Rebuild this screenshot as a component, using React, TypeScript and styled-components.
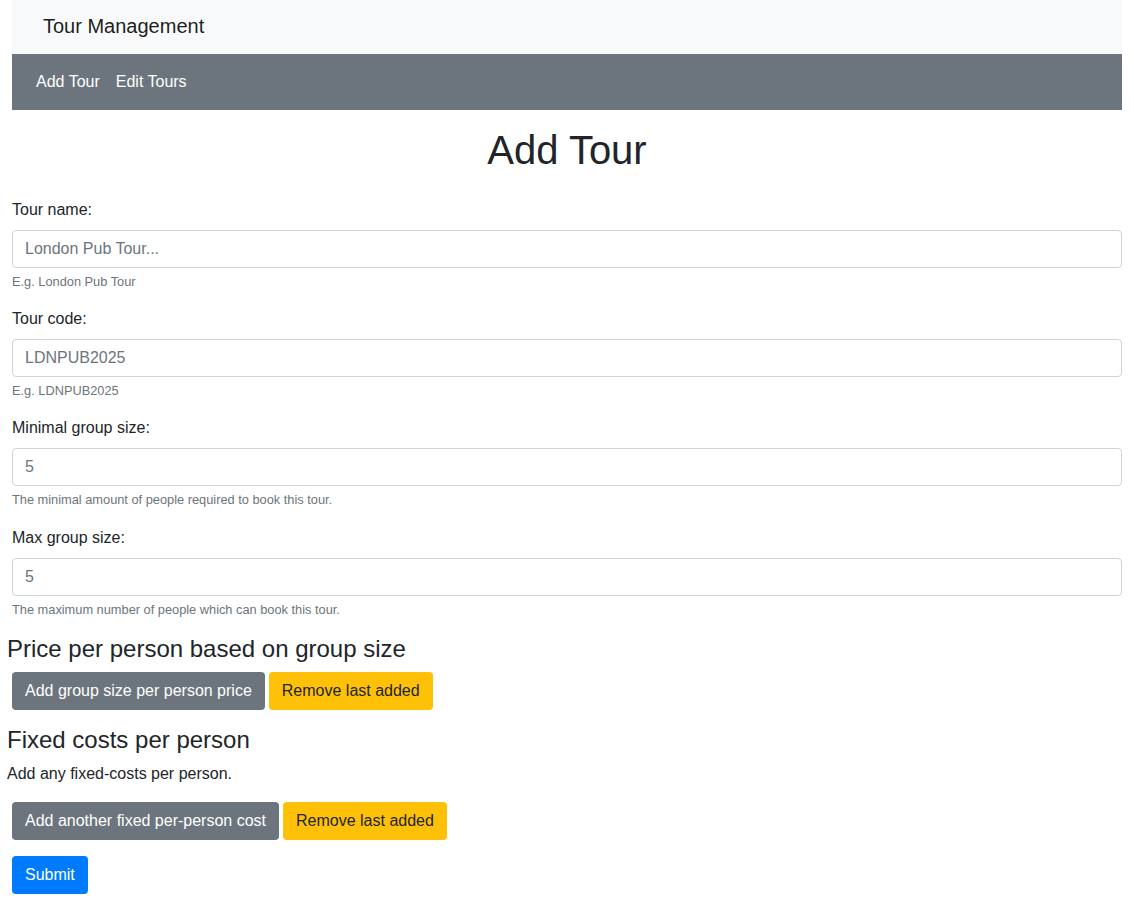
import React, { FC } from 'react';
import styled, { createGlobalStyle } from 'styled-components';

const GlobalStyle = createGlobalStyle`
    body {
        margin: 0;
        font-family: "Liberation Sans", Arial, Helvetica, sans-serif;
        font-size: 16px;
        line-height: 1.5;
        color: #212529;
        background: #fff;
    }
    * {
        box-sizing: border-box;
    }
`;

const Page = styled.div`
    padding: 0 12px;
`;

const BrandBar = styled.nav`
    display: flex;
    align-items: center;
    height: 54px;
    padding: 0 31px 2px;
    background: #f8f9fa;
`;

const Brand = styled.span`
    font-size: 20px;
    line-height: 30px;
    color: rgba(0, 0, 0, 0.9);
`;

const MenuBar = styled.nav`
    display: flex;
    align-items: center;
    height: 56px;
    padding: 0 16px;
    background: #6c757d;
`;

const MenuLink = styled.a`
    padding: 8px;
    color: #fff;
    text-decoration: none;
    line-height: 24px;
`;

const Title = styled.h1`
    margin: 16px 0 24px;
    font-size: 40px;
    font-weight: 500;
    line-height: 1.2;
    text-align: center;
`;

const FormGroup = styled.div`
    margin-bottom: 16px;
`;

const Label = styled.label`
    display: block;
    margin-bottom: 8px;
`;

const Input = styled.input`
    display: block;
    width: 100%;
    height: 38px;
    padding: 6px 12px;
    font-family: inherit;
    font-size: 16px;
    color: #495057;
    border: 1px solid #ced4da;
    border-radius: 4px;

    &::placeholder {
        color: #6c757d;
    }
`;

const Help = styled.small`
    display: block;
    margin-top: 4px;
    font-size: 12.8px;
    line-height: 19.2px;
    color: #6c757d;
`;

const Section = styled.div`
    margin-left: -5px;
`;

const SectionTitle = styled.h4`
    margin: 0 0 8px;
    font-size: 24px;
    font-weight: 500;
    line-height: 1.2;
`;

const Text = styled.p`
    margin: 0 0 16px;
`;

const ButtonRow = styled.div`
    display: flex;
    gap: 4px;
    margin: 0 0 16px 5px;
`;

const Button = styled.button<{ $variant: 'secondary' | 'warning' | 'primary' }>`
    height: 38px;
    padding: 6px 12px;
    font-family: inherit;
    font-size: 16px;
    line-height: 24px;
    border: 1px solid transparent;
    border-radius: 4px;
    cursor: pointer;
    color: ${(p) => (p.$variant === 'warning' ? '#212529' : '#fff')};
    background: ${(p) =>
        p.$variant === 'warning' ? '#ffc107' : p.$variant === 'primary' ? '#007bff' : '#6c757d'};
`;

const fields = [
    { label: 'Tour name:', placeholder: 'London Pub Tour...', help: 'E.g. London Pub Tour' },
    { label: 'Tour code:', placeholder: 'LDNPUB2025', help: 'E.g. LDNPUB2025' },
    {
        label: 'Minimal group size:',
        placeholder: '5',
        help: 'The minimal amount of people required to book this tour.',
    },
    {
        label: 'Max group size:',
        placeholder: '5',
        help: 'The maximum number of people which can book this tour.',
    },
];

const App: FC = () => (
    <Page>
        <GlobalStyle />
        <BrandBar>
            <Brand>Tour Management</Brand>
        </BrandBar>
        <MenuBar>
            <MenuLink href="#">Add Tour</MenuLink>
            <MenuLink href="#">Edit Tours</MenuLink>
        </MenuBar>
        <Title>Add Tour</Title>
        <form onSubmit={(e) => e.preventDefault()}>
            {fields.map((field) => (
                <FormGroup key={field.label}>
                    <Label>{field.label}</Label>
                    <Input placeholder={field.placeholder} />
                    <Help>{field.help}</Help>
                </FormGroup>
            ))}
            <Section>
                <SectionTitle>Price per person based on group size</SectionTitle>
                <ButtonRow>
                    <Button type="button" $variant="secondary">
                        Add group size per person price
                    </Button>
                    <Button type="button" $variant="warning">
                        Remove last added
                    </Button>
                </ButtonRow>
                <SectionTitle>Fixed costs per person</SectionTitle>
                <Text>Add any fixed-costs per person.</Text>
                <ButtonRow>
                    <Button type="button" $variant="secondary">
                        Add another fixed per-person cost
                    </Button>
                    <Button type="button" $variant="warning">
                        Remove last added
                    </Button>
                </ButtonRow>
            </Section>
            <Button type="submit" $variant="primary">
                Submit
            </Button>
        </form>
    </Page>
);

export default App;
